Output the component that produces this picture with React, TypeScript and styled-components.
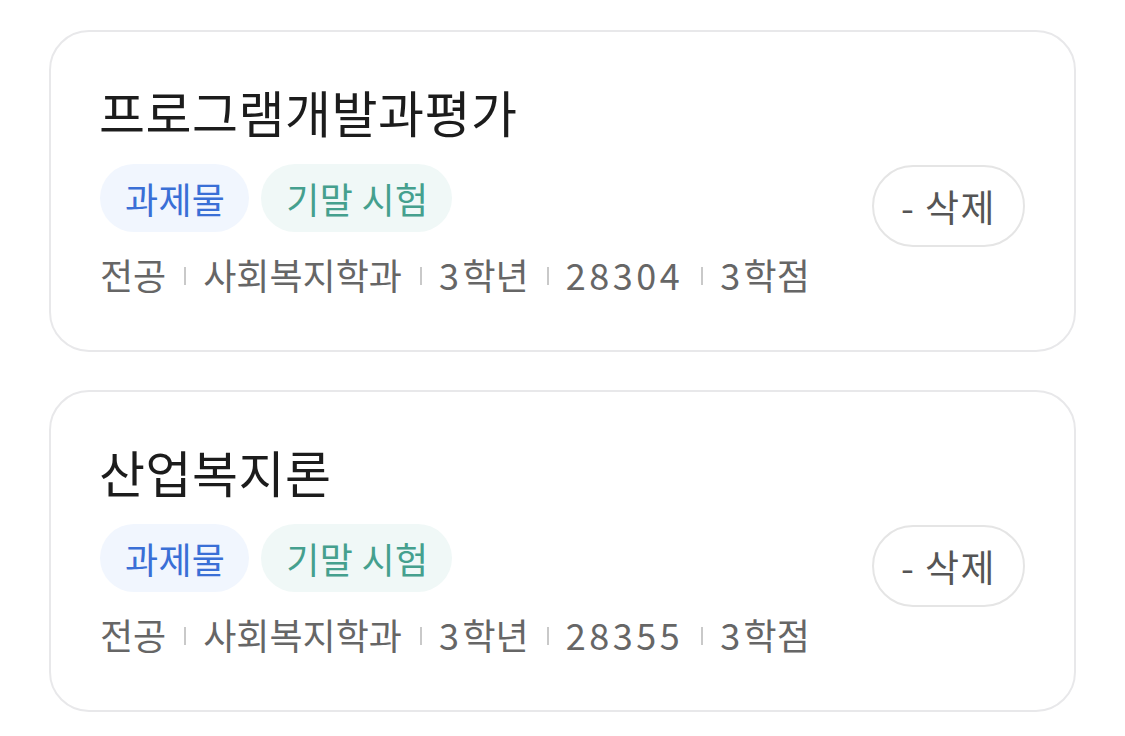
import React from "react";
import styled, { createGlobalStyle } from "styled-components";

const GlobalStyle = createGlobalStyle`
  html, body {
    margin: 0;
    padding: 0;
    background: #ffffff;
    font-family: "Noto Sans CJK KR", "Noto Sans", sans-serif;
  }
`;

const List = styled.div`
  display: flex;
  flex-direction: column;
  gap: 38px;
  padding: 30px 0 0 49px;
  width: 1027px;
`;

const Card = styled.div`
  display: flex;
  align-items: center;
  justify-content: space-between;
  box-sizing: border-box;
  height: 322px;
  border: 2px solid #e8e8ea;
  border-radius: 40px;
  padding: 0 49px 0 49px;
  background: #ffffff;
`;

const Info = styled.div`
  display: flex;
  flex-direction: column;
`;

const Title = styled.div`
  font-size: 50px;
  line-height: 60px;
  letter-spacing: 0.5px;
  color: #1c1c1c;
  font-weight: 400;
  margin: -6px 0 23px -1px;
`;

const Tags = styled.div`
  display: flex;
  gap: 12px;
  margin-bottom: 20px;
`;

const Chip = styled.span<{ $tone: "blue" | "teal" }>`
  display: inline-flex;
  align-items: center;
  height: 68px;
  padding: 0 24px 0 25px;
  border-radius: 34px;
  font-size: 36px;
  letter-spacing: 0.3px;
  background: ${(p) => (p.$tone === "blue" ? "#f1f6fe" : "#f0f8f7")};
  color: ${(p) => (p.$tone === "blue" ? "#3a6fd6" : "#45a08e")};
`;

const Meta = styled.div`
  display: flex;
  align-items: center;
  font-size: 36px;
  line-height: 44px;
  color: #666666;
`;

const Num = styled.span`
  letter-spacing: 3.5px;
`;

const Sep = styled.span`
  display: inline-block;
  width: 2px;
  height: 18px;
  background: #c9c9c9;
  margin: 4px 17px 0 18px;
`;

const DeleteButton = styled.button`
  box-sizing: border-box;
  width: 153px;
  height: 82px;
  margin-top: 30px;
  border: 2px solid #e5e5e5;
  border-radius: 41px;
  background: #ffffff;
  font-family: "Noto Sans CJK KR", "Noto Sans", sans-serif;
  font-size: 37px;
  letter-spacing: 1.5px;
  color: #555555;
  padding: 0;
`;

const courses = [
  { name: "프로그램개발과평가", code: "28304" },
  { name: "산업복지론", code: "28355" },
];

export default function App() {
  return (
    <>
      <GlobalStyle />
      <List>
        {courses.map((c) => (
          <Card key={c.code}>
            <Info>
              <Title>{c.name}</Title>
              <Tags>
                <Chip $tone="blue">과제물</Chip>
                <Chip $tone="teal">기말 시험</Chip>
              </Tags>
              <Meta>
                <span>전공</span>
                <Sep />
                <span>사회복지학과</span>
                <Sep />
                <span>
                  <Num>3</Num>학년
                </span>
                <Sep />
                <Num>{c.code}</Num>
                <Sep />
                <span>
                  <Num>3</Num>학점
                </span>
              </Meta>
            </Info>
            <DeleteButton>- 삭제</DeleteButton>
          </Card>
        ))}
      </List>
    </>
  );
}
